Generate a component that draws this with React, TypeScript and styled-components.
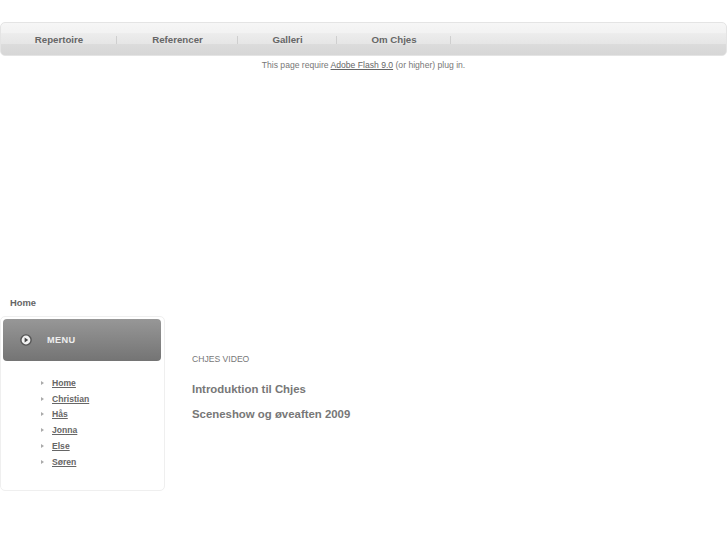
import React from "react";
import styled, { createGlobalStyle } from "styled-components";

const GlobalStyle = createGlobalStyle`
  html, body {
    margin: 0;
    padding: 0;
    background: #fff;
    font-family: "Liberation Sans", Arial, sans-serif;
  }
`;

const topItems = [
  { label: "Repertoire", width: 116 },
  { label: "Referencer", width: 121 },
  { label: "Galleri", width: 99 },
  { label: "Om Chjes", width: 114 }
];

const people = ["Home", "Christian", "Hås", "Jonna", "Else", "Søren"];

const videos = ["Introduktion til Chjes", "Sceneshow og øveaften 2009"];

export default function App() {
  return (
    <Page>
      <GlobalStyle />
      <TopBar>
        {topItems.map(item => (
          <TopItem key={item.label} $width={item.width}>
            {item.label}
          </TopItem>
        ))}
      </TopBar>
      <FlashNote>
        This page require <a href="#flash">Adobe Flash 9.0</a> (or higher) plug
        in.
      </FlashNote>
      <Crumb>Home</Crumb>
      <Columns>
        <SideBox>
          <MenuHead>
            <svg width="12" height="12" viewBox="0 0 12 12">
              <circle cx="6" cy="6" r="5.8" fill="#555" />
              <circle cx="6" cy="6" r="4.4" fill="#f2f2f2" />
              <path d="M4.6 3.6 L8.2 6 L4.6 8.4 Z" fill="#444" />
            </svg>
            <MenuTitle>MENU</MenuTitle>
          </MenuHead>
          <PeopleList>
            {people.map(name => (
              <PersonRow key={name}>
                <Arrow />
                <PersonLink href="#person">{name}</PersonLink>
              </PersonRow>
            ))}
          </PeopleList>
        </SideBox>
        <Main>
          <MainLabel>CHJES VIDEO</MainLabel>
          {videos.map(title => (
            <VideoTitle key={title}>{title}</VideoTitle>
          ))}
        </Main>
      </Columns>
    </Page>
  );
}

const Page = styled.div`
  width: 727px;
  height: 545px;
  overflow: hidden;
  padding-top: 22px;
  box-sizing: border-box;
`;

const TopBar = styled.div`
  display: flex;
  align-items: center;
  box-sizing: border-box;
  height: 34px;
  padding-top: 1px;
  border: 1px solid #e4e4e4;
  border-radius: 5px;
  background: linear-gradient(
    to bottom,
    #f6f6f6 0%,
    #f2f2f2 32%,
    #ececec 33%,
    #e6e6e6 65%,
    #dcdcdc 66%,
    #d6d6d6 100%
  );
`;

const TopItem = styled.div<{ $width: number }>`
  position: relative;
  width: ${props => props.$width}px;
  text-align: center;
  font-size: 9.7px;
  font-weight: 700;
  color: #666;
  line-height: 12px;

  &::after {
    content: "";
    position: absolute;
    right: 0;
    top: 2px;
    height: 8px;
    border-right: 1px solid #cfcfcf;
  }
`;

const FlashNote = styled.div`
  text-align: center;
  font-size: 8.6px;
  line-height: 12px;
  margin-top: 3px;
  color: #777;

  a {
    color: #666;
  }
`;

const Crumb = styled.div`
  margin: 226px 0 0 10px;
  font-size: 9.4px;
  font-weight: 700;
  line-height: 12px;
  color: #666;
`;

const Columns = styled.div`
  display: flex;
  margin-top: 7px;
`;

const SideBox = styled.div`
  box-sizing: border-box;
  width: 165px;
  height: 175px;
  padding: 2px 2px 0;
  border: 1px solid #efefef;
  border-radius: 5px;
`;

const MenuHead = styled.div`
  display: flex;
  align-items: center;
  width: 158px;
  height: 42px;
  padding-left: 17px;
  box-sizing: border-box;
  border-radius: 4px;
  background: linear-gradient(to bottom, #979797, #747474);
  gap: 15px;
`;

const MenuTitle = styled.span`
  font-size: 9.2px;
  font-weight: 700;
  letter-spacing: 0.4px;
  color: #eee;
`;

const PeopleList = styled.div`
  display: flex;
  flex-direction: column;
  padding: 14px 0 0 38px;
`;

const PersonRow = styled.div`
  display: flex;
  align-items: center;
  height: 15.8px;
  gap: 8px;
`;

const Arrow = styled.span`
  width: 0;
  height: 0;
  border-left: 3px solid #aaa;
  border-top: 2px solid transparent;
  border-bottom: 2px solid transparent;
`;

const PersonLink = styled.a`
  font-size: 8.6px;
  font-weight: 700;
  color: #666;
`;

const Main = styled.div`
  padding: 37px 0 0 27px;
`;

const MainLabel = styled.div`
  font-size: 8.6px;
  line-height: 12px;
  color: #777;
  margin-bottom: 17px;
`;

const VideoTitle = styled.div`
  font-size: 11.4px;
  font-weight: 700;
  line-height: 14px;
  color: #777;
  margin-bottom: 11px;
`;
